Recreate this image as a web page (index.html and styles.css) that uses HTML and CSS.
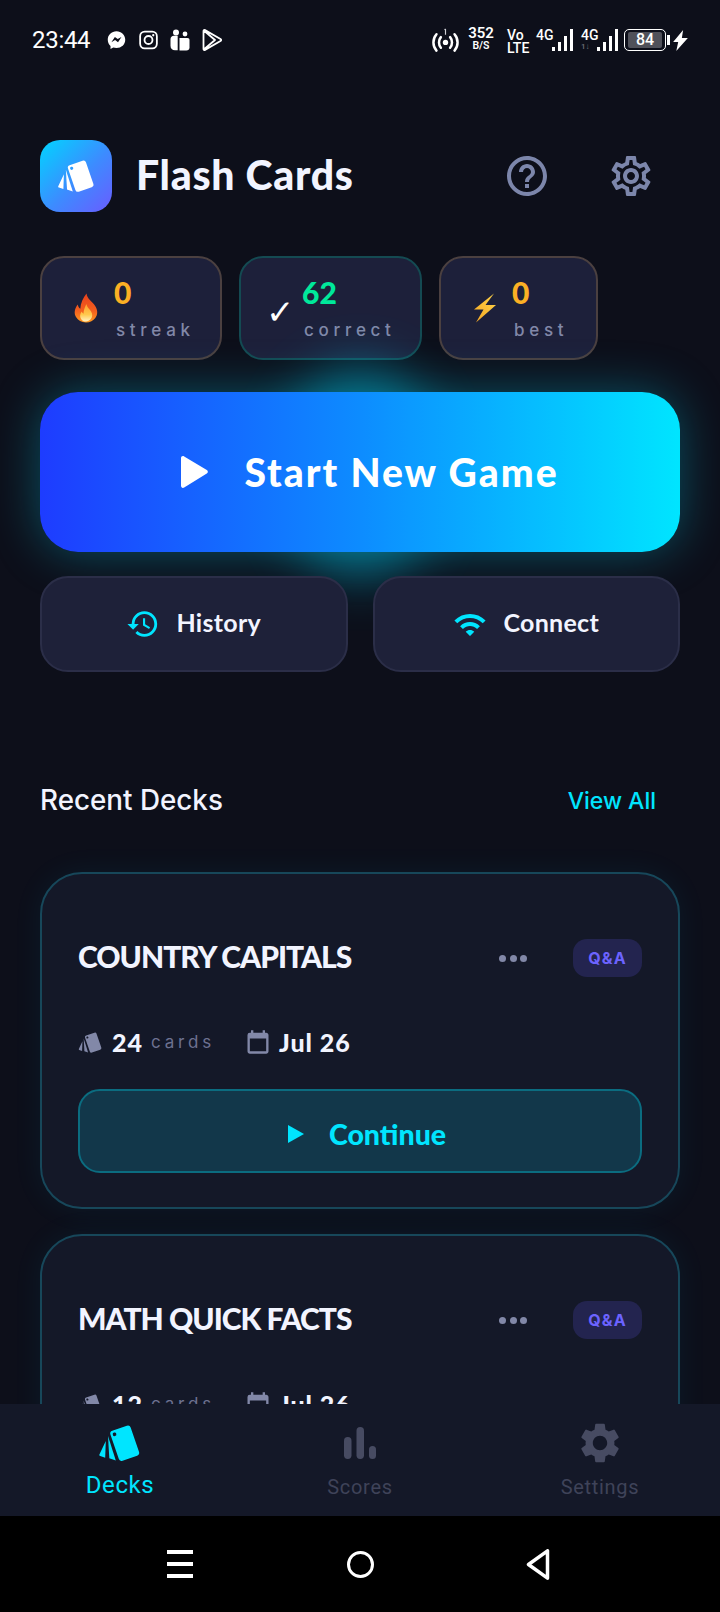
FILE: index.html
```html
<!DOCTYPE html>
<html lang="en">
<head>
<meta charset="utf-8">
<title>Flash Cards</title>
<link rel="stylesheet" href="styles.css">
</head>
<body>
<svg class="defs" width="0" height="0" aria-hidden="true">
  <defs>
    <symbol id="deck" viewBox="0 0 44 40">
      <path fill-rule="evenodd" transform="rotate(-19 26.700 20.200)" d="M19 4.400h15.400a3 3 0 0 1 3 3v25.600a3 3 0 0 1-3 3H19a3 3 0 0 1-3-3V7.400a3 3 0 0 1 3-3zM18.200 8.500a1.800 1.800 0 1 0 3.600 0 1.800 1.800 0 1 0-3.600 0z"/>
      <path d="M7.800 18 1.400 31.500c-.3.800.1 1.300.8 1.500l5 1.800z"/>
      <path d="M10 13 11.300 35.300l6.500 2.200z"/>
    </symbol>
    <symbol id="gear" viewBox="0 0 24 24">
      <path d="M19.140 12.940c.04-.3.060-.61.060-.94 0-.32-.020-.64-.070-.94l2.030-1.580a.49.49 0 0 0 .12-.61l-1.920-3.320a.488.488 0 0 0-.59-.22l-2.390.96c-.5-.38-1.030-.7-1.620-.94l-.36-2.540a.484.484 0 0 0-.48-.41h-3.840c-.24 0-.43.170-.47.410l-.36 2.540c-.59.240-1.130.57-1.620.94l-2.390-.96c-.22-.08-.47 0-.59.220L2.740 8.870c-.12.210-.08.470.12.610l2.030 1.580c-.05.300-.09.630-.09.940s.02.640.07.940l-2.030 1.580a.49.49 0 0 0-.12.610l1.920 3.320c.12.220.37.290.59.220l2.390-.96c.5.380 1.030.7 1.620.94l.36 2.540c.05.240.24.410.48.410h3.840c.24 0 .44-.17.470-.41l.36-2.540c.59-.24 1.130-.56 1.620-.94l2.390.96c.22.080.47 0 .59-.22l1.920-3.320c.12-.22.070-.47-.12-.61l-2.010-1.580zM12 15.600c-1.980 0-3.600-1.620-3.600-3.600s1.620-3.600 3.600-3.600 3.600 1.620 3.600 3.600-1.620 3.600-3.600 3.600z"/>
    </symbol>
    <symbol id="gear-outline" viewBox="0 0 24 24">
      <path d="M19.430 12.980c.04-.32.070-.64.070-.98 0-.34-.030-.66-.070-.98l2.110-1.650c.19-.15.240-.42.120-.64l-2-3.460a.5.500 0 0 0-.61-.22l-2.490 1c-.52-.4-1.080-.73-1.690-.98l-.38-2.650A.488.488 0 0 0 14 2h-4c-.25 0-.46.180-.49.420l-.38 2.650c-.61.250-1.170.59-1.690.98l-2.490-1a.566.566 0 0 0-.18-.03c-.17 0-.34.090-.43.250l-2 3.460c-.13.220-.07.490.12.640l2.110 1.650c-.04.320-.07.650-.07.980 0 .33.030.66.070.98l-2.110 1.650c-.19.150-.24.420-.12.640l2 3.460a.5.500 0 0 0 .61.220l2.490-1c.52.400 1.080.73 1.690.98l.38 2.650c.03.240.24.420.49.420h4c.25 0 .46-.18.490-.42l.38-2.650c.61-.25 1.170-.59 1.690-.98l2.490 1c.06.020.12.030.18.030.17 0 .34-.09.43-.25l2-3.460c.12-.22.070-.49-.12-.64l-2.110-1.650zm-1.980-1.710c.04.310.05.520.05.730 0 .21-.02.430-.05.730l-.14 1.130.89.700 1.080.84-.7 1.210-1.270-.51-1.040-.42-.9.680c-.43.320-.84.560-1.250.73l-1.060.43-.16 1.130-.2 1.350h-1.400l-.19-1.350-.16-1.130-1.060-.43c-.43-.18-.83-.41-1.230-.71l-.91-.7-1.060.43-1.270.51-.7-1.210 1.080-.84.890-.7-.14-1.130c-.03-.31-.05-.54-.05-.74s.02-.43.05-.73l.14-1.130-.89-.7-1.080-.84.7-1.210 1.270.51 1.040.42.9-.68c.43-.32.84-.56 1.250-.73l1.060-.43.16-1.130.2-1.350h1.390l.19 1.350.16 1.130 1.060.43c.43.180.83.410 1.230.71l.91.700 1.060-.43 1.270-.51.7 1.210-1.070.85-.89.7.14 1.130zM12 8c-2.210 0-4 1.790-4 4s1.790 4 4 4 4-1.790 4-4-1.790-4-4-4zm0 6c-1.100 0-2-.9-2-2s.9-2 2-2 2 .9 2 2-.9 2-2 2z"/>
    </symbol>
  </defs>
</svg>
<div class="app">
  <header class="statusbar">
    <div class="status-left">
      <span class="clock">23:44</span>
      <svg class="s-icon" viewBox="0 0 20 20"><path class="w" d="M10 .8C4.800.8.800 4.600.800 9.700c0 2.700 1.100 5 2.900 6.600v3.100l2.900-1.500c1 .3 2.200.5 3.400.5 5.200 0 9.200-3.800 9.200-8.700S15.200.8 10 .8z"/><path class="k" d="m4.600 12.400 3.700-5.600 3 2.200 3.900-2.200-3.600 5.600-3.100-2.300z"/></svg>
      <svg class="s-icon" viewBox="0 0 20 20"><rect x="1.200" y="1.200" width="17.600" height="17.600" rx="4.800" class="ol"/><circle cx="10" cy="10" r="4.200" class="ol"/><circle cx="15" cy="5" r="1.200" class="w"/></svg>
      <svg class="s-icon s-lg" viewBox="0 0 20 22"><circle cx="6" cy="3.400" r="3" class="w"/><path class="w" d="M.500 10c0-2 1.400-3.300 3.300-3.300h3.900v14.600H5c-2.800 0-4.500-1.700-4.500-4.500z"/><circle cx="15" cy="5" r="2.400" class="w"/><path class="w" d="M9.500 9h8c1.200 0 2 .8 2 2v7.500c0 1.700-1.300 3-3.200 3H9.500z"/></svg>
      <svg class="s-icon s-lg" viewBox="0 0 20 22"><path class="ol2" d="M1.500 2v18c0 1 .8 1.300 1.500.9l15.500-8.900c.9-.5.900-1.500 0-2L3 1.100c-.7-.4-1.500-.1-1.500.9zM1.800 1.500 13 11 1.800 20.500"/></svg>
    </div>
    <div class="status-right">
      <svg class="hotspot" viewBox="0 0 28 26"><circle cx="14" cy="15" r="2.800" class="w"/><path class="ol3" d="M9.200 9.500c-2.600 3-2.600 8 0 11M18.800 9.500c2.600 3 2.600 8 0 11M4.600 6.500c-4.200 5-4.200 12 0 17M23.400 6.500c4.200 5 4.200 12 0 17"/><path class="ol4" d="M14 1v6M13 2l1-1"/></svg>
      <div class="speed"><b>352</b><small>B/S</small></div>
      <div class="volte"><span>Vo</span><span>LTE</span></div>
      <div class="net"><span class="net-g">4G</span>
        <svg class="sig" viewBox="0 0 21 22"><rect x="0" y="18" width="3" height="4" class="w"/><rect x="6" y="13" width="3" height="9" class="w"/><rect x="12" y="7" width="3" height="15" class="w"/><rect x="18" y="0" width="3" height="22" class="w"/></svg>
      </div>
      <div class="net net-last"><span class="net-g">4G<i>1↓</i></span>
        <svg class="sig" viewBox="0 0 21 22"><rect x="0" y="18" width="3" height="4" class="w"/><rect x="6" y="13" width="3" height="9" class="w"/><rect x="12" y="7" width="3" height="15" class="w"/><rect x="18" y="0" width="3" height="22" class="w"/></svg>
      </div>
      <div class="battery"><div class="bat-body"><span>84</span></div><div class="bat-tip"></div></div>
      <svg class="charge" viewBox="0 0 14 20"><path class="w" d="M9.500 0 0 11.500h4.800L3 20 14 7.500H8.300z"/></svg>
    </div>
  </header>

  <main class="main">
    <section class="brand">
      <div class="logo"><svg class="logo-icon" viewBox="0 0 44 40"><use href="#deck" width="44" height="40"/></svg></div>
      <h1 class="title">Flash Cards</h1>
      <div class="brand-actions">
        <svg class="hdr-icon" viewBox="0 0 24 24"><path d="M11 18h2v-2h-2v2zm1-16C6.480 2 2 6.480 2 12s4.480 10 10 10 10-4.480 10-10S17.520 2 12 2zm0 18c-4.410 0-8-3.590-8-8s3.590-8 8-8 8 3.590 8 8-3.590 8-8 8zm0-14c-2.210 0-4 1.790-4 4h2c0-1.100.9-2 2-2s2 .9 2 2c0 2-3 1.750-3 5h2c0-2.250 3-2.500 3-5 0-2.210-1.790-4-4-4z"/></svg>
        <svg class="hdr-icon" viewBox="0 0 24 24"><use href="#gear-outline" width="24" height="24"/></svg>
      </div>
    </section>

    <section class="stats">
      <div class="stat stat-amber stat-w1">
        <svg class="stat-icon" viewBox="0 0 26 30"><defs><linearGradient id="fl" x1="0" y1="0" x2="0" y2="1"><stop offset="0" stop-color="#e8401c"/><stop offset=".6" stop-color="#f4601e"/><stop offset="1" stop-color="#ff9a1f"/></linearGradient><linearGradient id="fl2" x1="0" y1="0" x2="0" y2="1"><stop offset="0" stop-color="#ff9e2c"/><stop offset=".6" stop-color="#ffc94d"/><stop offset="1" stop-color="#fff3c4"/></linearGradient></defs><path fill="url(#fl)" d="M13.500.5c.8 5.500 5 7.500 8 11.500 3.500 4.500 3.500 9.500.8 13-2 2.700-5.300 4.500-9.300 4.500-4.500 0-8-2.200-10-5.500C.800 20.500 1.500 15.500 4.800 11.500c.3 2 1 3.300 2.500 4.300C7.500 10.500 10 5 13.500.5z"/><path fill="url(#fl2)" d="M13.500 11c.3 3 2.500 4.500 4.300 7 2 2.800 1.800 6-.2 8.200-1 1.200-2.700 2.300-4.600 2.300-2.200 0-4-1-5-2.600-1.500-2.400-1-5.400.8-7.400.3 1 .8 1.800 1.700 2.200.1-3.400 1.300-6.800 3-9.700z"/></svg>
        <div class="stat-text"><span class="stat-num amber">0</span><span class="stat-label">streak</span></div>
      </div>
      <div class="stat stat-green stat-w2">
        <span class="stat-check">✓</span>
        <div class="stat-text"><span class="stat-num green">62</span><span class="stat-label">correct</span></div>
      </div>
      <div class="stat stat-amber stat-w3">
        <svg class="stat-icon stat-bolt" viewBox="0 0 24 30"><defs><linearGradient id="bo" x1="1" y1="0" x2="0" y2="1"><stop offset="0" stop-color="#ffd54a"/><stop offset="1" stop-color="#f5a623"/></linearGradient></defs><path fill="url(#bo)" d="M21 .5 1 16.500h9.500L3 29.500l20-17.500H12.500z"/></svg>
        <div class="stat-text"><span class="stat-num amber">0</span><span class="stat-label">best</span></div>
      </div>
    </section>

    <div class="start-wrap">
      <div class="glow"></div>
      <button class="start">
        <svg class="start-play" viewBox="0 0 27 32"><path d="M0 2.200C0 .4 1.700-.5 3.200.5l22.600 13.400c1.400.8 1.400 2.800 0 3.600L3.200 31.500C1.700 32.500 0 31.600 0 29.800z"/></svg>
        <span>Start New Game</span>
      </button>
    </div>

    <section class="actions">
      <button class="action">
        <svg class="a-icon" viewBox="0 0 24 24"><path d="M13 3a9 9 0 0 0-9 9H1l3.890 3.890.07.140L9 12H6c0-3.870 3.130-7 7-7s7 3.130 7 7-3.130 7-7 7c-1.930 0-3.680-.79-4.940-2.060l-1.420 1.420A8.954 8.954 0 0 0 13 21a9 9 0 0 0 0-18zm-1 5v5l4.280 2.540.72-1.210-3.500-2.080V8H12z"/></svg>
        <span>History</span>
      </button>
      <button class="action">
        <svg class="a-icon" viewBox="0 0 24 24"><path d="M1 9.500 3 11.500c5-5 13-5 18 0l2-2c-6.100-6.100-15.900-6.100-22 0zm4 4 2 2c2.800-2.800 7.200-2.800 10 0l2-2c-3.900-3.900-10.100-3.900-14 0zm4 4 3 3 3-3c-1.700-1.700-4.300-1.700-6 0z"/></svg>
        <span>Connect</span>
      </button>
    </section>

    <section class="recent-head">
      <h2 class="recent-title">Recent Decks</h2>
      <a class="view-all">View All</a>
    </section>

    <article class="card">
      <div class="card-top">
        <h3 class="card-title">COUNTRY CAPITALS</h3>
        <span class="dots"><i></i><i></i><i></i></span>
        <span class="pill">Q&amp;A</span>
      </div>
      <div class="meta">
        <svg class="m-deck" viewBox="0 0 44 40"><use href="#deck" width="44" height="40"/></svg>
        <b class="m-num">24</b><span class="m-unit">cards</span>
        <svg class="m-cal" viewBox="0 0 24 24"><path d="M19 4h-1V2h-2v2H8V2H6v2H5a2 2 0 0 0-2 2v14c0 1.100.9 2 2 2h14c1.100 0 2-.9 2-2V6c0-1.100-.9-2-2-2zm0 16H5V9h14v11z"/></svg>
        <b class="m-date">Jul 26</b>
      </div>
      <button class="continue">
        <svg class="c-play" viewBox="0 0 16 18"><path d="M0 0v18l16-9z"/></svg>
        <span>Continue</span>
      </button>
    </article>

    <article class="card">
      <div class="card-top">
        <h3 class="card-title">MATH QUICK FACTS</h3>
        <span class="dots"><i></i><i></i><i></i></span>
        <span class="pill">Q&amp;A</span>
      </div>
      <div class="meta">
        <svg class="m-deck" viewBox="0 0 44 40"><use href="#deck" width="44" height="40"/></svg>
        <b class="m-num">12</b><span class="m-unit">cards</span>
        <svg class="m-cal" viewBox="0 0 24 24"><path d="M19 4h-1V2h-2v2H8V2H6v2H5a2 2 0 0 0-2 2v14c0 1.100.9 2 2 2h14c1.100 0 2-.9 2-2V6c0-1.100-.9-2-2-2zm0 16H5V9h14v11z"/></svg>
        <b class="m-date">Jul 26</b>
      </div>
    </article>
  </main>

  <nav class="tabbar">
    <div class="tab tab-on">
      <svg class="tab-icon" viewBox="0 0 44 40"><use href="#deck" width="44" height="40"/></svg>
      <span>Decks</span>
    </div>
    <div class="tab tab-scores">
      <svg class="tab-icon" viewBox="0 0 32 32"><rect x="0" y="10" width="7.500" height="22" rx="3.700"/><rect x="12.500" y="0" width="7.500" height="32" rx="3.700"/><rect x="25" y="19" width="7" height="13" rx="3.500"/></svg>
      <span>Scores</span>
    </div>
    <div class="tab tab-settings">
      <svg class="tab-icon" viewBox="2 2 20 20"><use href="#gear" width="24" height="24"/></svg>
      <span>Settings</span>
    </div>
  </nav>

  <footer class="sysnav">
    <div class="hamb"><i></i><i></i><i></i></div>
    <div class="home"></div>
    <svg class="back" viewBox="0 0 24 31"><path d="M21.500 1.800v27.400L2.500 15.500z"/></svg>
  </footer>
</div>
</body>
</html>
```
FILE: styles.css
```css
* { box-sizing: border-box; margin: 0; padding: 0; }
html, body { width: 720px; height: 1612px; overflow: hidden; background: #0d0f1a; }
body { font-family: "Lato", sans-serif; color: #f2f4ff; }
.defs { display: block; width: 0; height: 0; }
button { font: inherit; color: inherit; border: none; background: none; }
.app { width: 720px; height: 1612px; display: flex; flex-direction: column; }

/* status bar */
.statusbar { flex: none; height: 80px; padding: 0 32px; display: flex; align-items: center; justify-content: space-between; }
.status-left { display: flex; align-items: center; gap: 13px; }
.clock { font: 400 24px "Roboto", sans-serif; color: #fff; width: 58px; margin-right: 4px; letter-spacing: -.3px; }
.s-icon { width: 19px; height: 20px; flex: none; }
.s-lg { width: 20px; height: 22px; margin-left: -1px; }
.k { fill: #0d0f1a; }
.w { fill: #fff; }
.ol { fill: none; stroke: #fff; stroke-width: 1.900; }
.ol2 { fill: none; stroke: #fff; stroke-width: 1.800; stroke-linejoin: round; }
.ol3 { fill: none; stroke: #fff; stroke-width: 2.600; stroke-linecap: round; }
.ol4 { fill: none; stroke: #cfd0d5; stroke-width: 1.200; }
.status-right { display: flex; align-items: center; height: 26px; }
.hotspot { width: 27px; height: 25px; margin-right: 10px; }
.speed { display: flex; flex-direction: column; align-items: center; width: 24px; margin: 0 14px 4px 0; color: #fff; font-family: "Roboto", sans-serif; }
.speed b { font-size: 15px; font-weight: 600; line-height: 14px; }
.speed small { font-size: 10.500px; font-weight: 600; line-height: 11px; }
.volte { display: flex; flex-direction: column; width: 20px; margin: 4px 9px 0 0; font: 500 14px/13px "Roboto", sans-serif; color: #fff; }
.net { display: flex; align-items: flex-end; height: 22px; margin-right: 8px; }
.net-last { margin-right: 6px; }
.net-g { position: relative; align-self: flex-start; font: 500 14px/13px "Roboto", sans-serif; color: #fff; width: 16px; height: 22px; white-space: nowrap; }
.net-g i { position: absolute; left: 0; top: 14px; font: 500 8px/8px "Roboto", sans-serif; color: #6e7078; }
.sig { width: 21px; height: 22px; }
.battery { display: flex; align-items: center; }
.bat-body { width: 42px; height: 22px; border: 1.500px solid #fff; border-radius: 5px; padding: 2px 3px; display: flex; }
.bat-body span { flex: 1; background: #50515a; border-radius: 2px; color: #fff; font: 500 16px/15px "Roboto", sans-serif; text-align: center; }
.bat-tip { width: 3px; height: 10px; background: #fff; margin-left: 1px; }
.charge { width: 15px; height: 21px; margin-left: 3px; }

/* main */
.main { flex: 1; min-height: 0; overflow: hidden; padding: 60px 40px 0; }
.brand { display: flex; align-items: center; height: 72px; }
.logo { width: 72px; height: 72px; border-radius: 20px; background: linear-gradient(135deg, #00d5ff 0%, #3d8bff 55%, #6a5cff 100%); display: flex; align-items: center; justify-content: center; flex: none; }
.logo-icon { width: 39px; height: 36px; fill: #fff; }
.title { margin-left: 24px; padding-bottom: 4px; font: 900 41px/1 "Lato", sans-serif; letter-spacing: .7px; color: #f2f4ff; flex: 1; }
.brand-actions { display: flex; align-items: center; gap: 56px; margin-right: 25px; margin-top: -1px; }
.hdr-icon { width: 48px; height: 48px; fill: #7c86ab; }

.stats { display: flex; gap: 17px; margin-top: 44px; }
.stat { height: 104px; border-radius: 24px; background: #1d203a; border: 2px solid; display: flex; align-items: center; flex: none; }
.stat-amber { border-color: #4b4040; }
.stat-green { border-color: #144a52; }
.stat-w1 { width: 182px; padding-left: 31px; }
.stat-w2 { width: 183px; padding-left: 25px; }
.stat-w3 { width: 159px; padding-left: 32px; }
.stat-icon { width: 26px; height: 30px; flex: none; }
.stat-bolt { width: 24px; }
.stat-check { font: 400 34px/1 "DejaVu Sans", sans-serif; color: #fff; width: 34px; margin-top: 8px; }
.stat-text { display: flex; flex-direction: column; margin-left: 15px; }
.stat-w2 .stat-text { margin-left: 2px; }
.stat-num { font: 900 30px/32px "Lato", sans-serif; }
.amber { color: #fbb024; }
.green { color: #00e89a; }
.stat-label { font: 500 17px/22px "Inter", sans-serif; letter-spacing: 4.700px; color: #8288a8; margin: 11px 0 0 2px; }

.start-wrap { position: relative; margin-top: 32px; height: 160px; }
.glow { position: absolute; left: 240px; top: -28px; width: 160px; height: 216px; border-radius: 50%; background: #00c3e6; opacity: .42; filter: blur(26px); }
.start { position: relative; display: flex; align-items: center; justify-content: center; gap: 36px; width: 640px; height: 160px; border-radius: 38px; background: linear-gradient(90deg, #1e3cff 0%, #0d8cff 50%, #00e5ff 100%); box-shadow: 0 0 48px rgba(0, 200, 230, .36); color: #fff; padding-left: 20px; }
.start-play { width: 27px; height: 32px; fill: #fff; }
.start span { font: 900 39px/1 "Lato", sans-serif; letter-spacing: 2px; }

.actions { position: relative; display: flex; gap: 25px; margin-top: 24px; }
.action { flex: 1; height: 96px; border-radius: 28px; background: #1e2139; border: 2px solid #2b2e48; display: flex; align-items: center; justify-content: center; gap: 16px; }
.a-icon { width: 34px; height: 34px; fill: #00e5ff; }
.action span { font: 700 25px/1 "Lato", sans-serif; color: #f2f4ff; letter-spacing: .3px; padding-bottom: 4px; }

.recent-head { display: flex; justify-content: space-between; align-items: center; margin-top: 108px; height: 40px; padding-right: 24px; }
.recent-title { font: 500 27.800px/1 "Inter", sans-serif; color: #f2f4ff; margin-top: 2px; }
.view-all { font: 500 23px/1 "Inter", sans-serif; color: #00e5ff; margin-top: 3px; }

.card { height: 337px; margin-top: 52px; border-radius: 42px; background: #141828; border: 2px solid #17475a; padding: 65px 36px 0; box-shadow: 0 0 30px rgba(0, 180, 220, .07); }
.card + .card { margin-top: 25px; }
.card-top { display: flex; align-items: center; height: 38px; }
.card-title { flex: 1; font: 900 30px/1 "Lato", sans-serif; letter-spacing: -1px; color: #f2f4ff; padding-bottom: 4px; }
.dots { display: flex; gap: 3.500px; margin-right: 46px; }
.dots i { width: 7px; height: 7px; border-radius: 50%; background: #8288a8; }
.pill { width: 69px; height: 38px; border-radius: 14px; background: #23244f; color: #6c63ff; font: 700 16px/38px "Inter", sans-serif; letter-spacing: 1.100px; text-align: center; }
.meta { display: flex; align-items: center; height: 30px; margin-top: 50px; }
.m-deck { width: 25px; height: 23px; fill: #8288a8; margin-right: 9px; }
.m-num { font: 900 25px/1 "Lato", sans-serif; letter-spacing: 1px; color: #f2f4ff; }
.m-unit { font: 400 17px/1 "Inter", sans-serif; letter-spacing: 3.800px; color: #6d7190; margin-left: 8px; }
.m-cal { width: 28px; height: 28px; fill: #8288a8; margin-left: 29px; margin-right: 7px; }
.m-date { font: 900 25px/1 "Lato", sans-serif; letter-spacing: 1px; color: #f2f4ff; }
.continue { display: flex; align-items: center; justify-content: center; gap: 25px; width: 100%; height: 84px; margin-top: 32px; padding: 6px 0 0 14px; border-radius: 22px; background: #12374a; border: 2px solid #0b6c80; color: #00e5ff; }
.c-play { width: 16px; height: 18px; fill: #00e5ff; }
.continue span { font: 900 28.500px/1 "Lato", sans-serif; }

/* tab bar */
.tabbar { flex: none; height: 112px; background: #141828; display: flex; }
.tab { flex: 1; display: flex; flex-direction: column; align-items: center; color: #3f4359; font: 400 20px/21px "Roboto", sans-serif; letter-spacing: .7px; }
.tab-icon { fill: #474b62; flex: none; }
.tab-on { padding-top: 19px; color: #00e5ff; font-size: 24px; line-height: 24px; letter-spacing: .6px; }
.tab-on .tab-icon { width: 44px; height: 40px; fill: #00e5ff; margin-bottom: 10px; }
.tab-scores { padding-top: 23px; }
.tab-scores .tab-icon { width: 32px; height: 32px; margin-bottom: 18px; }
.tab-settings { padding-top: 19px; }
.tab-settings .tab-icon { width: 40px; height: 40px; margin-bottom: 14px; }

/* system nav */
.sysnav { flex: none; height: 96px; background: #000; display: flex; align-items: center; justify-content: center; gap: 154px; padding-right: 4px; }
.hamb { width: 26px; height: 28px; display: flex; flex-direction: column; justify-content: space-between; }
.hamb i { display: block; height: 4px; background: #fff; }
.home { width: 27px; height: 27px; border: 3.500px solid #fff; border-radius: 50%; }
.back { width: 24px; height: 31px; margin-left: -2px; fill: none; stroke: #fff; stroke-width: 3.500; stroke-linejoin: round; }
```
